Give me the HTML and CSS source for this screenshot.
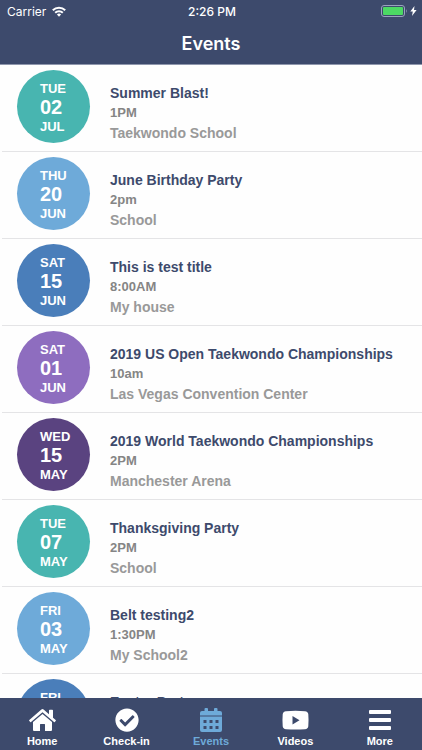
FILE: index.html
```html
<!DOCTYPE html>
<html lang="en">
<head>
<meta charset="utf-8">
<meta name="viewport" content="width=device-width, initial-scale=1">
<title>Events</title>
<link rel="stylesheet" href="styles.css">
</head>
<body>
<div class="app">
  <header class="header">
    <div class="status">
      <div class="status-left">
        <span>Carrier</span>
        <svg class="wifi" viewBox="0 0 14 11" aria-hidden="true"><g fill="none" stroke="currentColor" stroke-width="2"><path d="M.8 4.2a8.800 8.800 0 0 1 12.400 0"/><path d="M3.200 6.800a5.400 5.400 0 0 1 7.600 0"/></g><path fill="currentColor" d="M4.900 8.500a3 3 0 0 1 4.200 0L7 10.800z"/></svg>
      </div>
      <span class="clock">2:26 PM</span>
      <div class="status-right">
        <svg class="battery" viewBox="0 0 27 12" aria-hidden="true"><rect x=".5" y=".5" width="23" height="11" rx="2.500" fill="none" stroke="#9aa3bd"/><rect x="2" y="2" width="20" height="8" rx="1" fill="#4cd964"/><path d="M25 4q1.500 2 0 4z" fill="#9aa3bd"/></svg>
        <svg class="bolt" viewBox="0 0 7 10" aria-hidden="true"><path fill="currentColor" d="M4.500 0L.3 5.600h2.500L2 10l4.600-6H4z"/></svg>
      </div>
    </div>
    <h1 class="title">Events</h1>
  </header>

  <main class="events">
    <article class="event">
      <div class="date teal"><div class="date-text"><span>TUE</span><strong>02</strong><span>JUL</span></div></div>
      <div class="info"><h2>Summer Blast!</h2><p class="time">1PM</p><p class="place">Taekwondo School</p></div>
    </article>
    <article class="event">
      <div class="date sky"><div class="date-text"><span>THU</span><strong>20</strong><span>JUN</span></div></div>
      <div class="info"><h2>June Birthday Party</h2><p class="time">2pm</p><p class="place">School</p></div>
    </article>
    <article class="event">
      <div class="date blue"><div class="date-text"><span>SAT</span><strong>15</strong><span>JUN</span></div></div>
      <div class="info"><h2>This is test title</h2><p class="time">8:00AM</p><p class="place">My house</p></div>
    </article>
    <article class="event">
      <div class="date lilac"><div class="date-text"><span>SAT</span><strong>01</strong><span>JUN</span></div></div>
      <div class="info"><h2>2019 US Open Taekwondo Championships</h2><p class="time">10am</p><p class="place">Las Vegas Convention Center</p></div>
    </article>
    <article class="event">
      <div class="date purple"><div class="date-text"><span>WED</span><strong>15</strong><span>MAY</span></div></div>
      <div class="info"><h2>2019 World Taekwondo Championships</h2><p class="time">2PM</p><p class="place">Manchester Arena</p></div>
    </article>
    <article class="event">
      <div class="date teal"><div class="date-text"><span>TUE</span><strong>07</strong><span>MAY</span></div></div>
      <div class="info"><h2>Thanksgiving Party</h2><p class="time">2PM</p><p class="place">School</p></div>
    </article>
    <article class="event">
      <div class="date sky"><div class="date-text"><span>FRI</span><strong>03</strong><span>MAY</span></div></div>
      <div class="info"><h2>Belt testing2</h2><p class="time">1:30PM</p><p class="place">My School2</p></div>
    </article>
    <article class="event">
      <div class="date blue"><div class="date-text"><span>FRI</span></div></div>
      <div class="info"><h2>Easter Party</h2></div>
    </article>
  </main>

  <nav class="tabs">
    <a class="tab" href="#home">
      <svg viewBox="0 0 27 24" aria-hidden="true"><path d="M12.400 1.500q1.100-.9 2.200 0L20 6.200V2.500q0-.8.800-.8h2.400q.8 0 .8.800v7.200l2.700 2.300q.4.400.1.800l-1 1.200q-.4.400-.8.100L13.500 4.300 2 14.100q-.4.300-.8-.1l-1-1.200q-.3-.4.100-.8z"/><path d="M13.500 6l9.500 8v8q0 1-1 1h-6v-6.500q0-.5-.5-.5h-4q-.5 0-.5.500V23H5q-1 0-1-1v-8z"/></svg>
      <span>Home</span>
    </a>
    <a class="tab" href="#check-in">
      <svg viewBox="0 0 512 512" aria-hidden="true"><path d="M504 256c0 136.967-111.033 248-248 248S8 392.967 8 256 119.033 8 256 8s248 111.033 248 248zM227.314 387.314l184-184c6.248-6.248 6.248-16.379 0-22.627l-22.627-22.627c-6.248-6.249-16.379-6.249-22.628 0L216 308.118l-70.059-70.059c-6.248-6.248-16.379-6.248-22.628 0l-22.627 22.627c-6.248 6.248-6.248 16.379 0 22.627l104 104c6.249 6.249 16.379 6.249 22.628.001z"/></svg>
      <span>Check-in</span>
    </a>
    <a class="tab active" href="#events" aria-current="page">
      <svg viewBox="0 0 22 24" aria-hidden="true"><path fill-rule="evenodd" d="M2 3h2.500V1q0-1 1-1H7q1 0 1 1v2h6V1q0-1 1-1h1.500q1 0 1 1v2H20q2 0 2 2v2.500H0V5q0-2 2-2zM0 8.500h22V22q0 2-2 2H2q-2 0-2-2zM3.500 12v3h3v-3zm6 0v3h3v-3zm6 0v3h3v-3zm-12 6v3h3v-3zm6 0v3h3v-3zm6 0v3h3v-3z"/></svg>
      <span>Events</span>
    </a>
    <a class="tab" href="#videos">
      <svg viewBox="0 0 27 24" aria-hidden="true"><path fill-rule="evenodd" d="M4 3.200q9.500-.8 19 0 3 .3 3.300 3 .5 6 0 12-.3 2.700-3.300 3-9.500.8-19 0-3-.3-3.300-3-.5-6 0-12 .3-2.700 3.300-3zM10.500 8v8.400l7-4.200z"/></svg>
      <span>Videos</span>
    </a>
    <a class="tab" href="#more">
      <svg viewBox="0 0 22 24" aria-hidden="true"><rect y="2" width="22" height="4" rx="1"/><rect y="10" width="22" height="4" rx="1"/><rect y="18" width="22" height="4" rx="1"/></svg>
      <span>More</span>
    </a>
  </nav>
</div>
</body>
</html>
```
FILE: styles.css
```css
* {
  box-sizing: border-box;
}

body {
  margin: 0;
  background: #fefefe;
  font-family: "Liberation Sans", Arial, sans-serif;
  font-weight: 700;
}

h1, h2, p {
  margin: 0;
}

.app {
  display: flex;
  flex-direction: column;
  height: 100vh;
}

.header {
  flex: none;
  background: #3d4a6c;
  border-bottom: 1px solid #8f97ad;
  color: #fff;
  font-family: Inter, sans-serif;
}

.status {
  display: grid;
  grid-template-columns: 1fr auto 1fr;
  align-items: center;
  height: 22px;
  padding: 0 5px 0 7px;
  font-size: 12px;
  font-weight: 400;
}

.status-left,
.status-right {
  display: flex;
  align-items: center;
  gap: 6px;
}

.status-right {
  justify-content: flex-end;
  gap: 2px;
}

.clock {
  font-weight: 500;
}

.wifi {
  width: 14px;
  height: 11px;
}

.battery {
  width: 27px;
  height: 12px;
}

.bolt {
  width: 7px;
  height: 10px;
}

.title {
  height: 42px;
  font-size: 18px;
  font-weight: 600;
  line-height: 44px;
  text-align: center;
}

.events {
  flex: 1;
  min-height: 0;
  overflow: hidden;
}

.event {
  display: flex;
  align-items: flex-start;
  gap: 20px;
  height: 87px;
  margin-left: 2px;
  padding: 5px 0 0 15px;
  border-bottom: 1px solid #e4e4e6;
}

.date {
  flex: none;
  width: 73px;
  height: 73px;
  padding: 9px 0 0 23px;
  border-radius: 50%;
  color: #fff;
  font-size: 13px;
}

.date-text {
  display: flex;
  flex-direction: column;
  line-height: 19px;
}

.date strong {
  font-size: 20px;
}

.teal { background: #48b5b0; }
.sky { background: #6eaad9; }
.blue { background: #4a7eba; }
.lilac { background: #8e6dbf; }
.purple { background: #5a4380; }

.info {
  padding-top: 13px;
  line-height: 20px;
}

.info h2 {
  color: #3d4a6c;
  font-size: 14px;
}

.time {
  color: #858585;
  font-size: 13px;
}

.place {
  color: #999;
  font-size: 14px;
}

.tabs {
  flex: none;
  display: grid;
  grid-template-columns: repeat(5, 1fr);
  height: 52px;
  background: #3d4a6c;
}

.tab {
  display: flex;
  flex-direction: column;
  align-items: center;
  gap: 3px;
  padding-top: 10px;
  color: #fff;
  font-size: 11px;
  line-height: 12px;
  text-decoration: none;
}

.tab svg {
  height: 24px;
  fill: currentColor;
}

.active {
  color: #6eaad9;
}
```
